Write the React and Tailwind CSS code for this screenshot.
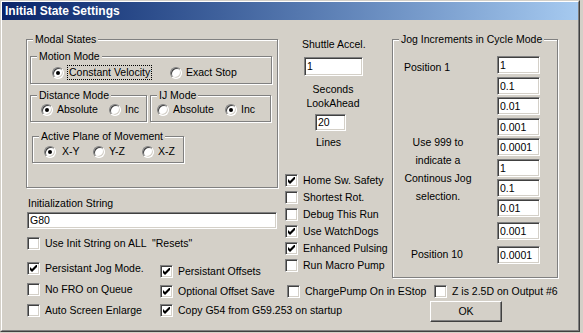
import React from "react";

function Group({ label, className = "", children }) {
  return (
    <div className={`relative shrink-0 border border-[#808080] shadow-[inset_1px_1px_0_#fff,1px_1px_0_#fff] ${className}`}>
      <span className="absolute left-[6px] top-[-8px] bg-[#d4d0c8] px-[2px] leading-[14px] whitespace-nowrap">{label}</span>
      {children}
    </div>
  );
}

function Radio({ on }) {
  return (
    <span className="flex h-[12px] w-[12px] shrink-0 items-center justify-center rounded-full border border-t-[#808080] border-l-[#808080] border-r-white border-b-white bg-white shadow-[inset_1px_1px_0_#404040,inset_-1px_-1px_0_#d4d0c8]">
      {on && <span className="h-[4px] w-[4px] rounded-full bg-black" />}
    </span>
  );
}

function Opt({ on, label, className = "" }) {
  return (
    <div className={`flex shrink-0 items-center gap-[4px] whitespace-nowrap leading-[13px] ${className}`}>
      <Radio on={on} />
      <span>{label}</span>
    </div>
  );
}

function Check({ on, label, className = "" }) {
  return (
    <div className={`flex shrink-0 items-center gap-[5px] whitespace-nowrap leading-[13px] ${className}`}>
      <span className="flex h-[13px] w-[13px] shrink-0 items-center justify-center border border-t-[#808080] border-l-[#808080] border-r-white border-b-white bg-white shadow-[inset_1px_1px_0_#404040,inset_-1px_-1px_0_#d4d0c8]">
        {on && (
          <svg width="7" height="7" viewBox="0 0 7 7">
            <polygon points="0,2 2,4 7,-1 7,2 2,7 0,5" fill="#000" />
          </svg>
        )}
      </span>
      <span>{label}</span>
    </div>
  );
}

function TextBox({ value, className = "" }) {
  return (
    <div className={`flex shrink-0 items-center border border-t-[#808080] border-l-[#808080] border-r-white border-b-white bg-white pl-[2px] leading-[13px] shadow-[inset_1px_1px_0_#404040,inset_-1px_-1px_0_#d4d0c8] ${className}`}>
      {value}
    </div>
  );
}

const jogs = [
  ["1", "mt-[16px]"],
  ["0.1", "mt-[3px]"],
  ["0.01", "mt-[2px]"],
  ["0.001", "mt-[3px]"],
  ["0.0001", "mt-[2px]"],
  ["1", "mt-[3px]"],
  ["0.1", "mt-[2px]"],
  ["0.01", "mt-[2px]"],
  ["0.001", "mt-[5px]"],
  ["0.0001", "mt-[6px]"],
];

export default function App() {
  return (
    <div className="h-[333px] w-[583px] overflow-hidden bg-[#d4d0c8] font-['Liberation_Sans',Arial,sans-serif] text-[10.5px] text-black">
      <div className="h-[332px] w-[580px] border border-t-[#d4d0c8] border-l-[#d4d0c8] border-r-[#404040] border-b-[#404040]">
        <div className="h-full w-full border border-t-white border-l-white border-r-[#808080] border-b-[#808080]">
          {/* title bar */}
          <div className="h-[18px] bg-gradient-to-r from-[#0a246a] to-[#a6caf0] pl-[3px] text-[12px] font-bold leading-[18px] text-white">
            Initial State Settings
          </div>

          <div className="flex pl-[24px] pt-[19px]">
            {/* left column */}
            <div className="flex w-[252px] shrink-0 flex-col">
              <Group label="Modal States" className="h-[149px] w-[252px]">
                <div className="flex flex-col pl-[3px] pt-[16px]">
                  <Group label="Motion Mode" className="h-[28px] w-[242px]">
                    <div className="flex pl-[21px] pt-[8px]">
                      <div className="flex w-[118px] shrink-0 items-center gap-[3px] whitespace-nowrap leading-[13px]">
                        <Radio on />
                        <span className="border border-dotted border-black px-[1px]">Constant Velocity</span>
                      </div>
                      <Opt label="Exact Stop" />
                    </div>
                  </Group>
                  <div className="mt-[11px] flex gap-[3px]">
                    <Group label="Distance Mode" className="h-[27px] w-[117px]">
                      <div className="flex pl-[10px] pt-[7px]">
                        <Opt on label="Absolute" className="w-[68px]" />
                        <Opt label="Inc" />
                      </div>
                    </Group>
                    <Group label="IJ Mode" className="h-[27px] w-[121px]">
                      <div className="flex pl-[6px] pt-[7px]">
                        <Opt label="Absolute" className="w-[68px]" />
                        <Opt on label="Inc" />
                      </div>
                    </Group>
                  </div>
                  <Group label="Active Plane of Movement" className="ml-[2px] mt-[14px] h-[27px] w-[152px]">
                    <div className="flex pl-[11px] pt-[8px]">
                      <Opt on label="X-Y" className="w-[49px] gap-[6px]" />
                      <Opt label="Y-Z" className="w-[49px]" />
                      <Opt label="X-Z" />
                    </div>
                  </Group>
                </div>
              </Group>

              <div className="ml-[2px] mt-[9px] leading-[13px]">Initialization String</div>
              <TextBox value="G80" className="ml-[1px] mt-[2px] h-[17px] w-[250px]" />
              <Check label={'Use Init String on ALL \u00a0"Resets"'} className="ml-[1px] mt-[8px]" />

              <div className="ml-[1px] mt-[12px] flex items-start">
                <Check on label="Persistant Jog Mode." className="w-[133px]" />
                <Check on label="Persistant Offsets" className="mt-[3px]" />
              </div>
              <div className="ml-[1px] mt-[5px] flex items-start">
                <Check label="No FRO on Queue" className="w-[133px]" />
                <Check on label="Optional Offset Save" className="mt-[2px]" />
              </div>
              <div className="ml-[1px] mt-[6px] flex items-start">
                <Check label="Auto Screen Enlarge" className="w-[133px]" />
                <Check on label="Copy G54 from G59.253 on startup" />
              </div>
            </div>

            {/* right part */}
            <div className="ml-[5px] flex flex-col">
              <div className="flex items-start">
                <div className="flex w-[100px] shrink-0 flex-col items-start">
                  <div className="ml-[19px] mt-[-1px] leading-[13px]">Shuttle Accel.</div>
                  <TextBox value="1" className="ml-[21px] mt-[6px] h-[19px] w-[59px]" />
                  <div className="mt-[6px] w-full text-center leading-[14px]">
                    Seconds
                    <br />
                    LookAhead
                  </div>
                  <TextBox value="20" className="ml-[32px] mt-[4px] h-[17px] w-[31px]" />
                  <div className="ml-[33px] mt-[5px] leading-[13px]">Lines</div>
                  <div className="ml-[2px] mt-[25px] flex flex-col gap-[4px]">
                    <Check on label="Home Sw. Safety" />
                    <Check label="Shortest Rot." />
                    <Check label="Debug This Run" />
                    <Check on label="Use WatchDogs" />
                    <Check on label="Enhanced Pulsing" />
                    <Check label="Run Macro Pump" />
                  </div>
                </div>

                <Group label="Jog Increments in Cycle Mode" className="ml-[9px] h-[239px] w-[166px]">
                  <div className="flex">
                    <div className="flex w-[90px] flex-col">
                      <div className="mt-[21px] pl-[11px] leading-[13px]">Position 1</div>
                      <div className="mt-[59px] text-center leading-[18px]">
                        Use 999 to
                        <br />
                        indicate a
                        <br />
                        Continous Jog
                        <br />
                        selection.
                      </div>
                      <div className="mt-[43px] pl-[18px] leading-[13px]">Position 10</div>
                    </div>
                    <div className="ml-[14px] flex flex-col">
                      {jogs.map(([v, cls], i) => (
                        <TextBox key={i} value={v} className={`h-[18px] w-[43px] ${cls}`} />
                      ))}
                    </div>
                  </div>
                </Group>
              </div>

              <div className="ml-[4px] mt-[7px] flex">
                <Check label="ChargePump On in EStop" className="w-[147px]" />
                <Check label="Z is 2.5D on Output #6" />
              </div>

              <button className="ml-[147px] mt-[3px] flex h-[21px] w-[72px] items-center justify-center border border-t-white border-l-white border-r-[#404040] border-b-[#404040] bg-[#d4d0c8] leading-[13px] shadow-[inset_-1px_-1px_0_#808080]">
                OK
              </button>
            </div>
          </div>
        </div>
      </div>
    </div>
  );
}
